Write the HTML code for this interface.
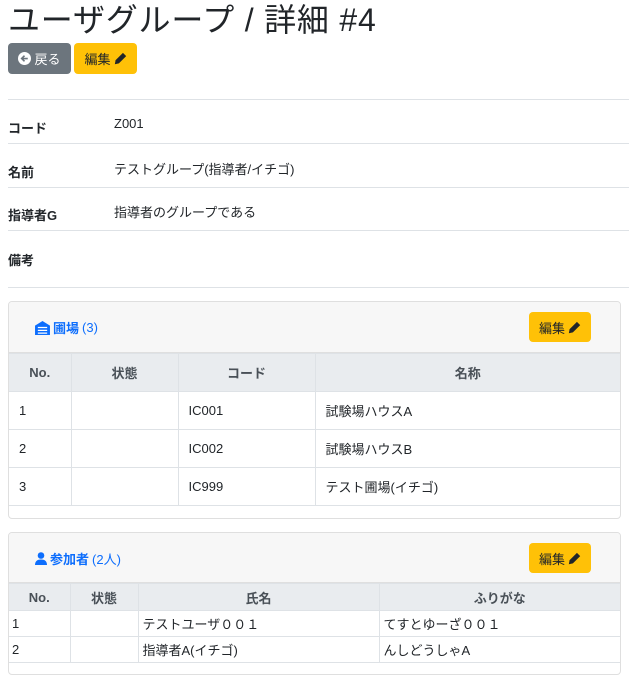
<!DOCTYPE html>
<html><head><meta charset="utf-8"><style>
*{box-sizing:border-box;margin:0;padding:0}
body{width:630px;height:689px;background:#fff;font-family:"Liberation Sans","Noto Sans CJK JP",sans-serif;color:#212529;position:relative;overflow:hidden}
h1{position:absolute;left:8px;top:0;font-size:32px;font-weight:400;line-height:40px;letter-spacing:0.8px}
.btn{position:absolute;border-radius:4px;font-size:13px;display:flex;align-items:center;justify-content:center;gap:3px}
.gray{background:#6c757d;color:#fff}
.yel{background:#ffc107;color:#212529}
.hr{position:absolute;left:8px;width:621px;height:1px;background:#dee2e6}
.lab{position:absolute;left:8px;font-size:13px;font-weight:700}
.val{position:absolute;left:114px;font-size:13px}
.card{position:absolute;left:8px;width:613px;border:1px solid #dfdfdf;border-radius:4px;overflow:hidden;background:#fff}
.ch{background:#f7f7f7;border-bottom:1px solid #dfdfdf;position:relative}
table{border-collapse:collapse;width:100%;font-size:13px}
th{background:#e9ecef;font-weight:700;color:#495057;border:1px solid #dee2e6;text-align:center}
td{border:1px solid #dee2e6;padding-left:10px}
tr>*:first-child{border-left:none}tr>*:last-child{border-right:none}
.ttl{position:absolute;left:26px;color:#0d6efd;font-size:13px;font-weight:700;display:flex;align-items:center;gap:3px}
.ttl span{font-weight:400}
</style></head><body>
<h1>ユーザグループ / 詳細 #4</h1>
<div class="btn gray" style="left:8px;top:43px;width:63px;height:31px"><svg width="13" height="13" viewBox="0 0 16 16"><circle cx="8" cy="8" r="8" fill="#fff"/><path d="M12 8H5M8 4.5L4.5 8 8 11.5" stroke="#6c757d" stroke-width="2" fill="none"/></svg>戻る</div>
<div class="btn yel" style="left:74px;top:43px;width:63px;height:31px">編集<svg width="13" height="13" viewBox="0 0 16 16"><path d="M11 1l4 4-9 9-5 1 1-5z" fill="#212529"/></svg></div>
<div class="hr" style="top:99px"></div>
<div class="lab" style="top:118px">コード</div><div class="val" style="top:116px">Z001</div>
<div class="hr" style="top:143px"></div>
<div class="lab" style="top:162px">名前</div><div class="val" style="top:159px">テストグループ(指導者/イチゴ)</div>
<div class="hr" style="top:187px"></div>
<div class="lab" style="top:205px">指導者G</div><div class="val" style="top:202px">指導者のグループである</div>
<div class="hr" style="top:230px"></div>
<div class="lab" style="top:250px">備考</div>
<div class="hr" style="top:287px"></div>

<div class="card" style="top:301px;height:218px">
<div class="ch" style="height:51px">
<div class="ttl" style="top:16px"><svg width="15" height="14" viewBox="0 0 16 15"><path d="M0 5L8 0l8 5v10H0z" fill="#0d6efd"/><path d="M3 7h10M3 10h10M3 13h10" stroke="#fff" stroke-width="1.3"/></svg>圃場 <span>(3)</span></div>
<div class="btn yel" style="left:520px;top:10px;width:62px;height:30px">編集<svg width="13" height="13" viewBox="0 0 16 16"><path d="M11 1l4 4-9 9-5 1 1-5z" fill="#212529"/></svg></div>
</div>
<table>
<tr style="height:38px"><th style="width:62px">No.</th><th style="width:107px">状態</th><th style="width:137px">コード</th><th>名称</th></tr>
<tr style="height:38px"><td>1</td><td></td><td>IC001</td><td>試験場ハウスA</td></tr>
<tr style="height:38px"><td>2</td><td></td><td>IC002</td><td>試験場ハウスB</td></tr>
<tr style="height:38px"><td>3</td><td></td><td>IC999</td><td>テスト圃場(イチゴ)</td></tr>
</table>
</div>

<div class="card" style="top:532px;height:143px">
<div class="ch" style="height:50px">
<div class="ttl" style="top:16px"><svg width="12" height="13" viewBox="0 0 12 13"><circle cx="6" cy="3.5" r="3.3" fill="#0d6efd"/><path d="M0 13c0-4 2.5-5.5 6-5.5s6 1.5 6 5.5z" fill="#0d6efd"/></svg>参加者<span>(2人)</span></div>
<div class="btn yel" style="left:520px;top:10px;width:62px;height:30px">編集<svg width="13" height="13" viewBox="0 0 16 16"><path d="M11 1l4 4-9 9-5 1 1-5z" fill="#212529"/></svg></div>
</div>
<table>
<tr style="height:27px"><th style="width:61px">No.</th><th style="width:68px">状態</th><th style="width:241px">氏名</th><th>ふりがな</th></tr>
<tr style="height:26px"><td style="padding-left:3px">1</td><td></td><td style="padding-left:4px">テストユーザ００１</td><td style="padding-left:4px">てすとゆーざ００１</td></tr>
<tr style="height:26px"><td style="padding-left:3px">2</td><td></td><td style="padding-left:4px">指導者A(イチゴ)</td><td style="padding-left:4px">んしどうしゃA</td></tr>
</table>
</div>
</body></html>
